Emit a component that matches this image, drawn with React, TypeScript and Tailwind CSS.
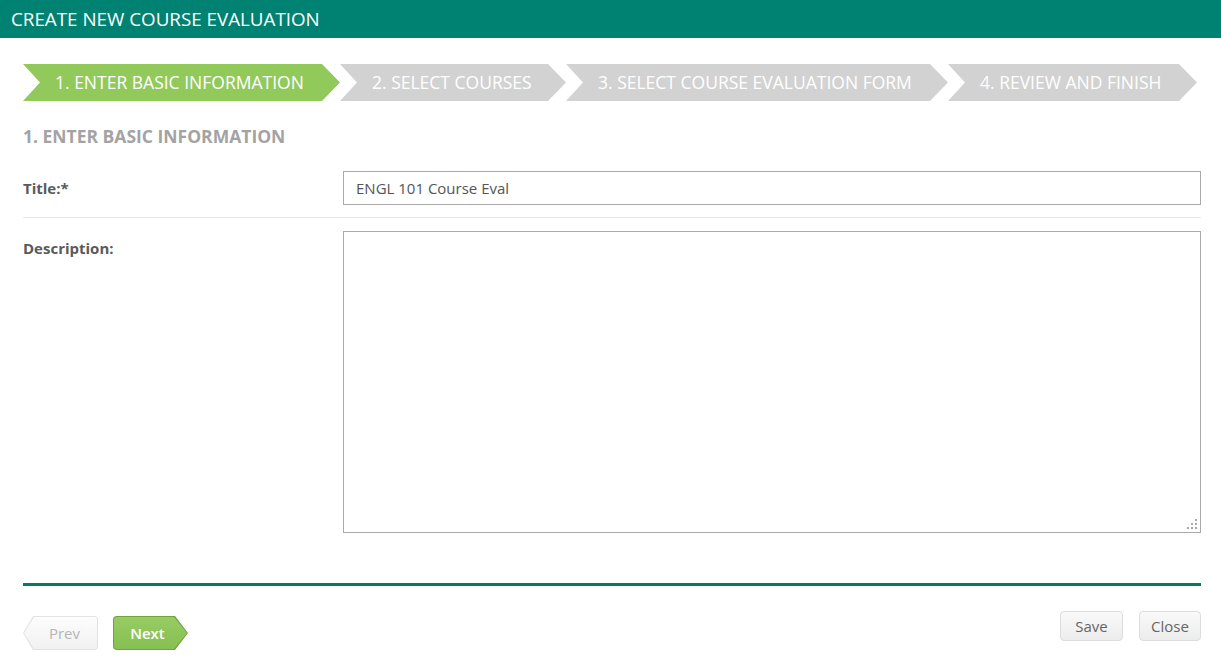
import React from "react";

const steps = [
	{ label: "1. ENTER BASIC INFORMATION", width: "w-[317px]", active: true },
	{ label: "2. SELECT COURSES", width: "w-[226px]", active: false },
	{ label: "3. SELECT COURSE EVALUATION FORM", width: "w-[382px]", active: false },
	{ label: "4. REVIEW AND FINISH", width: "w-[249px]", active: false },
];

function Stepper() {
	return (
		<div className="flex h-[37px]">
			{steps.map((step) => (
				<div
					key={step.label}
					className={`${step.width} ${
						step.active ? "bg-[#92c95b]" : "bg-[#d2d2d2]"
					} flex h-full shrink-0 items-center pl-[32px] text-[17.5px] text-white [clip-path:polygon(0_0,calc(100%-18px)_0,100%_50%,calc(100%-18px)_100%,0_100%,17px_50%)]`}
				>
					<span className="whitespace-nowrap">{step.label}</span>
				</div>
			))}
		</div>
	);
}

function ResizeGrip() {
	return (
		<svg
			width="10"
			height="10"
			viewBox="0 0 10 10"
			className="pointer-events-none absolute right-[4px] bottom-[4px]"
		>
			<rect x="8" y="0" width="2" height="2" fill="#aaaaaa" />
			<rect x="4" y="4" width="2" height="2" fill="#aaaaaa" />
			<rect x="8" y="4" width="2" height="2" fill="#aaaaaa" />
			<rect x="0" y="8" width="2" height="2" fill="#aaaaaa" />
			<rect x="4" y="8" width="2" height="2" fill="#aaaaaa" />
			<rect x="8" y="8" width="2" height="2" fill="#aaaaaa" />
		</svg>
	);
}

export default function App() {
	return (
		<div className="min-h-[658px] bg-white font-['Open_Sans',sans-serif] text-[15px] text-[#555]">
			{/* Header */}
			<div className="flex h-[38px] items-center bg-[#008272] px-[11px] text-[18.8px] text-white">
				CREATE NEW COURSE EVALUATION
			</div>

			<div className="pr-[20px] pl-[23px]">
				<div className="mt-[26px]">
					<Stepper />
				</div>

				<h2 className="mt-[23px] text-[17.5px] leading-[24px] font-bold text-[#a3a3a3]">
					1. ENTER BASIC INFORMATION
				</h2>

				{/* Title row */}
				<div className="mt-[23px] flex border-b border-[#e6e6e6] pb-[12px]">
					<label className="w-[320px] shrink-0 pt-[7px] leading-[20px] font-bold text-[#5a5a5a]">
						Title:*
					</label>
					<input
						type="text"
						defaultValue="ENGL 101 Course Eval"
						className="h-[34px] flex-1 border border-[#aaaaaa] px-[12px] text-[15px] text-[#555] outline-none"
					/>
				</div>

				{/* Description row */}
				<div className="mt-[13px] flex">
					<label className="w-[320px] shrink-0 pt-[7px] leading-[20px] font-bold text-[#5a5a5a]">
						Description:
					</label>
					<div className="relative flex-1">
						<textarea className="block h-[302px] w-full resize-none border border-[#aaaaaa] px-[12px] py-[6px] text-[15px] text-[#555] outline-none" />
						<ResizeGrip />
					</div>
				</div>

				<div className="mt-[50px] h-[3px] bg-[#007b6a]" />

				{/* Footer buttons */}
				<div className="flex items-start justify-between">
					<div className="mt-[30px] flex gap-[15px]">
						<div className="h-[34px] w-[75px] rounded-r-[4px] bg-[#e3e3e3] p-[1px] [clip-path:polygon(10px_0,100%_0,100%_100%,10px_100%,0_50%)]">
							<div className="flex h-full w-full items-center justify-center rounded-r-[3px] bg-gradient-to-b from-[#fdfdfd] to-[#f1f1f1] pl-[8px] text-[15px] text-[#b5b5b5] [clip-path:polygon(10px_0,100%_0,100%_100%,10px_100%,0_50%)]">
								Prev
							</div>
						</div>
						<div className="h-[34px] w-[75px] rounded-l-[4px] bg-[#6fa33f] p-[1px] [clip-path:polygon(0_0,calc(100%-13px)_0,100%_50%,calc(100%-13px)_100%,0_100%)]">
							<div className="flex h-full w-full items-center justify-center rounded-l-[3px] bg-gradient-to-b from-[#97cc62] to-[#86bf52] pr-[6px] text-[15px] font-semibold text-white [clip-path:polygon(0_0,calc(100%-13px)_0,100%_50%,calc(100%-13px)_100%,0_100%)]">
								Next
							</div>
						</div>
					</div>
					<div className="mt-[25px] flex gap-[16px]">
						<button className="h-[30px] w-[63px] rounded-[4px] border border-[#dddddd] bg-gradient-to-b from-[#fafafa] to-[#ececec] text-[15px] text-[#666]">
							Save
						</button>
						<button className="h-[30px] w-[62px] rounded-[4px] border border-[#dddddd] bg-gradient-to-b from-[#fafafa] to-[#ececec] text-[15px] text-[#666]">
							Close
						</button>
					</div>
				</div>
			</div>
		</div>
	);
}
